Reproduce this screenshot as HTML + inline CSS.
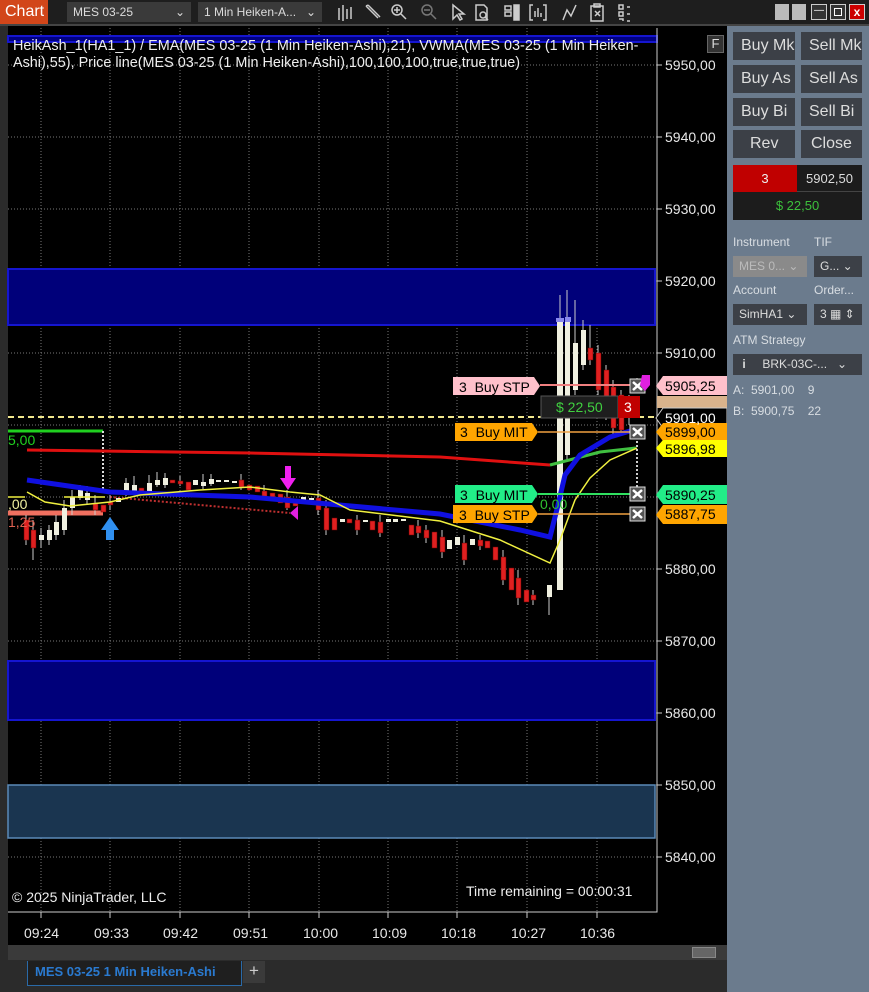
<!DOCTYPE html>
<html><head><meta charset="utf-8"><style>
*{margin:0;padding:0;box-sizing:border-box}
body{width:869px;height:992px;background:#2b2b2b;font-family:"Liberation Sans",Arial,sans-serif;overflow:hidden;position:relative}
.a{position:absolute}
.top{left:0;top:0;width:869px;height:25px;background:#1e1e1e}
.dd{background:#3a3a3a;color:#ddd;font-size:12px;height:20px;top:2px;line-height:20px;padding-left:6px}
.rp{left:727px;top:26px;width:142px;height:966px;background:#6b7b8d}
.btn{background:#3c4047;color:#ddd;font-size:16px;height:28px;line-height:28px;padding-left:8px;overflow:hidden;white-space:nowrap}
.lbl{color:#d8dde2;font-size:12px}
.sel{background:#3c4047;color:#ddd;font-size:12px;height:21px;line-height:21px;padding-left:6px;overflow:hidden;white-space:nowrap}
.ax{color:#e8e8e8;font-size:14px;left:665px}
.tl{color:#e8e8e8;font-size:14px;top:925px}
</style></head><body>
<div class="a top"></div>
<div class="a" style="left:0;top:24px;width:869px;height:2px;background:#444"></div>
<div class="a" style="left:0;top:0;width:48px;height:24px;background:#d2461a;color:#fff;font-size:16px;line-height:24px;padding-left:5px">Chart</div>
<div class="a dd" style="left:67px;width:124px">MES 03-25<span style="position:absolute;right:6px">&#8964;</span></div>
<div class="a dd" style="left:198px;width:124px">1 Min Heiken-A...<span style="position:absolute;right:6px">&#8964;</span></div>
<svg class="a" style="left:330px;top:0" width="300" height="26" stroke="#ccc" fill="none" stroke-width="1.5">
<path d="M9 8v12M13 5v16M17 9v10M21 7v12"/>
<path d="M36 6l12 12M38 5l12 12M36 6l2-1"/>
<circle cx="67" cy="10" r="5"/><path d="M71 14l5 5M64 10h6M67 7v6"/>
<g stroke="#777"><circle cx="97" cy="10" r="5"/><path d="M101 14l5 5M94 10h6"/></g>
<path d="M123 5l0 14 4-4 3 5 2-1-3-5 5 0z"/>
<path d="M146 5h8l3 3v12h-11z"/><circle cx="153" cy="15" r="3"/><path d="M155 17l3 3"/>
<path d="M175 6h6v4h-6zM175 12h6v4h-6z"/><rect x="184" y="5" width="5" height="15" fill="#ccc"/>
<path d="M203 5h-3v15h3M213 5h3v15h-3M205 17v-6M208 17v-9M211 17v-4"/>
<path d="M233 20l4-10 4 6 5-11"/>
<path d="M261 6h12v15h-12zM264 4h6v3h-6z"/><path d="M265 11l5 5M270 11l-5 5"/>
<path d="M289 5h4v4h-4zM289 12h4v4h-4zM289 19h4v2M297 7h10M297 14h10M297 21h10"/>
</svg>
<div class="a" style="left:775px;top:4px;width:14px;height:16px;background:#bbb"></div>
<div class="a" style="left:792px;top:4px;width:14px;height:16px;background:#bbb"></div>
<div class="a" style="left:811px;top:4px;width:16px;height:16px;background:#333;border:1px solid #ccc;color:#fff;font-size:10px;text-align:center">&#8212;</div>
<div class="a" style="left:830px;top:4px;width:16px;height:16px;background:#333;border:1px solid #ccc"><div style="margin:3px;width:8px;height:8px;border:1px solid #fff"></div></div>
<div class="a" style="left:849px;top:4px;width:16px;height:16px;background:#c00;border:1px solid #ccc;color:#fff;font-size:12px;font-weight:bold;line-height:14px;text-align:center">x</div>

<div class="a" style="left:8px;top:26px;width:719px;height:919px;background:#000"></div>
<svg class="a" style="left:0;top:0" width="727" height="960">
<g stroke="#777" stroke-dasharray="1,2" stroke-width="1">
<path d="M8 65H657M8 137H657M8 209H657M8 281H657M8 353H657M8 425H657M8 497H657M8 569H657M8 641H657M8 713H657M8 785H657M8 857H657"/>
<path d="M41 28V912M110 28V912M180 28V912M249 28V912M319 28V912M388 28V912M457 28V912M527 28V912M597 28V912"/>
</g>
<rect x="8" y="36" width="649" height="6" fill="#000080" stroke="#1515d0" stroke-width="2"/>
<rect x="8" y="269" width="647" height="56" fill="#00007a" stroke="#1515d0" stroke-width="2"/>
<rect x="8" y="661" width="647" height="59" fill="#00007a" stroke="#1515d0" stroke-width="2"/>
<rect x="8" y="785" width="647" height="53" fill="#1a3550" stroke="#5a8ab8" stroke-width="1.5"/>
<path d="M657 28V912H8" stroke="#ccc" fill="none"/>
<g stroke="#ccc"><path d="M657 65h5M657 137h5M657 209h5M657 281h5M657 353h5M657 569h5M657 641h5M657 713h5M657 785h5M657 857h5M41 912v6M110 912v6M180 912v6M249 912v6M319 912v6M388 912v6M457 912v6M527 912v6M597 912v6"/></g>
<path d="M8 417H657" stroke="#f0e68c" stroke-width="2" stroke-dasharray="6,4"/>
<path d="M8 431H103" stroke="#20d020" stroke-width="3"/>
<path d="M103 431V495" stroke="#ddd" stroke-width="2" stroke-dasharray="2,2"/>
<path d="M8 513H103" stroke="#f07060" stroke-width="5"/>
<path d="M110 497L290 513" stroke="#c03030" stroke-width="2" stroke-dasharray="2,2"/>
<g stroke="#ccc" stroke-width="1">
<path d="M26 515v30M33 520v40M41 528v20M49 525v20M56 515v25M64 500v35M72 490v25M80 485v15M87 486v18M95 495v20M110 495v15M126 478v18M134 476v18M149 475v20M157 472v15M165 473v15M180 476v10M203 474v15M211 474v12M241 474v16M264 485v15M287 490v20M318 490v25M326 500v35M357 515v20M380 515v22M418 520v18M426 525v18M442 530v28M464 535v30M480 535v15M503 550v35M518 570v35M533 590v15M549 585v30M560 295v295M567 290v170M575 300v95M583 320v50M590 325v40M598 345v50M606 365v55M613 380v55M621 390v45M629 395v30"/>
</g>
<g fill="#f0f0e0">
<rect x="39" y="535" width="5" height="5"/><rect x="47" y="530" width="5" height="10"/><rect x="54" y="522" width="5" height="13"/><rect x="62" y="508" width="5" height="22"/><rect x="70" y="497" width="5" height="11"/><rect x="78" y="490" width="5" height="8"/><rect x="85" y="493" width="5" height="7"/><rect x="116" y="498" width="5" height="4"/><rect x="124" y="483" width="5" height="9"/><rect x="132" y="485" width="5" height="7"/><rect x="147" y="483" width="5" height="9"/><rect x="155" y="480" width="5" height="5"/><rect x="163" y="478" width="5" height="7"/><rect x="193" y="480" width="5" height="5"/><rect x="201" y="482" width="5" height="4"/><rect x="209" y="479" width="5" height="5"/><rect x="216" y="480" width="5" height="2"/><rect x="224" y="480" width="5" height="2"/><rect x="232" y="481" width="5" height="2"/><rect x="301" y="497" width="5" height="3"/><rect x="309" y="498" width="5" height="2"/><rect x="340" y="519" width="5" height="3"/><rect x="363" y="520" width="5" height="2"/><rect x="386" y="519" width="5" height="3"/><rect x="393" y="519" width="5" height="3"/><rect x="401" y="519" width="5" height="2"/><rect x="447" y="540" width="5" height="9"/><rect x="455" y="537" width="5" height="8"/><rect x="470" y="539" width="5" height="6"/><rect x="547" y="585" width="5" height="12"/>
<rect x="557" y="320" width="6" height="270"/><rect x="565" y="320" width="5" height="135"/><rect x="573" y="343" width="5" height="47"/><rect x="581" y="330" width="5" height="35"/>
</g>
<rect x="556" y="318" width="8" height="4" fill="#8888ee"/><rect x="565" y="317" width="6" height="5" fill="#8888ee"/>
<g fill="#e02020" stroke="#600" stroke-width=".5">
<rect x="24" y="520" width="5" height="20"/><rect x="31" y="530" width="5" height="18"/><rect x="93" y="503" width="5" height="7"/><rect x="101" y="505" width="5" height="7"/><rect x="108" y="502" width="5" height="3"/><rect x="139" y="488" width="5" height="7"/><rect x="170" y="480" width="5" height="3"/><rect x="178" y="481" width="5" height="3"/><rect x="186" y="482" width="5" height="8"/><rect x="239" y="480" width="5" height="7"/><rect x="247" y="485" width="5" height="5"/><rect x="255" y="486" width="5" height="6"/><rect x="262" y="491" width="5" height="6"/><rect x="270" y="493" width="5" height="4"/><rect x="278" y="494" width="5" height="9"/><rect x="285" y="497" width="5" height="11"/><rect x="293" y="503" width="5" height="3"/><rect x="316" y="498" width="5" height="12"/><rect x="324" y="508" width="5" height="22"/><rect x="332" y="518" width="5" height="12"/><rect x="347" y="519" width="5" height="4"/><rect x="355" y="520" width="5" height="10"/><rect x="370" y="521" width="5" height="9"/><rect x="378" y="522" width="5" height="11"/><rect x="409" y="525" width="5" height="10"/><rect x="416" y="526" width="5" height="7"/><rect x="424" y="530" width="5" height="8"/><rect x="432" y="532" width="5" height="16"/><rect x="440" y="537" width="5" height="15"/><rect x="462" y="543" width="5" height="17"/><rect x="478" y="540" width="5" height="6"/><rect x="485" y="541" width="5" height="7"/><rect x="493" y="547" width="5" height="13"/><rect x="501" y="557" width="5" height="23"/><rect x="509" y="568" width="5" height="22"/><rect x="516" y="578" width="5" height="20"/><rect x="524" y="590" width="5" height="12"/><rect x="531" y="595" width="5" height="5"/><rect x="588" y="348" width="5" height="12"/><rect x="596" y="353" width="5" height="37"/><rect x="604" y="370" width="5" height="43"/><rect x="611" y="387" width="5" height="41"/><rect x="619" y="395" width="5" height="35"/><rect x="627" y="400" width="5" height="10"/>
</g>
<path d="M27 450L250 453L440 457L550 465" stroke="#e01010" stroke-width="3" fill="none"/>
<path d="M550 465L600 452L636 448" stroke="#40c040" stroke-width="3" fill="none"/>
<path d="M27 480L110 492L250 497L440 514L520 530L550 537L558 505L565 475L580 455L610 437L640 428" stroke="#1010e0" stroke-width="5" fill="none"/>
<path d="M27 492L45 502L70 506L110 502L140 495L200 490L250 487L290 492L320 495L350 510L440 521L500 540L550 563L560 540L575 500L590 478L610 460L637 448" stroke="#f0f040" stroke-width="1.5" fill="none"/>
<path d="M8 497H25M64 497H105" stroke="#f0f040" stroke-width="1.5"/>
<path d="M106 530v10h8v-10h5l-9-13-9 13z" fill="#3090f0"/>
<path d="M285 466v12h-5l8 12 8-12h-5v-12z" fill="#f020f0"/>
<path d="M298 506v14l-8-7z" fill="#e020e0"/>
<path d="M637 392v-16" stroke="#ccc" stroke-dasharray="2,2"/>
<path d="M637 441v50" stroke="#ccc" stroke-width="2" stroke-dasharray="2,2"/>
<path d="M540 385H632" stroke="#f08080" stroke-width="2"/>
<path d="M538 432H632" stroke="#f0a040" stroke-width="1.5"/>
<path d="M538 494H632" stroke="#30e060" stroke-width="2"/>
<path d="M538 514H632" stroke="#f0a040" stroke-width="1.5"/>
<path d="M453 377h81l6 9-6 9h-81z" fill="#ffc0cb"/>
<path d="M455 423h77l6 9-6 9h-77z" fill="#ffa500"/>
<path d="M455 485h77l6 9-6 9h-77z" fill="#22ee88"/>
<path d="M453 505h79l6 9-6 9h-79z" fill="#ffa500"/>
<g fill="#555" stroke="#ddd"><rect x="630" y="379" width="15" height="14"/><rect x="630" y="425" width="15" height="14"/><rect x="630" y="487" width="15" height="14"/><rect x="630" y="507" width="15" height="14"/></g>
<g stroke="#fff" stroke-width="2.5"><path d="M633 382l9 8M642 382l-9 8M633 428l9 8M642 428l-9 8M633 490l9 8M642 490l-9 8M633 510l9 8M642 510l-9 8"/></g>
<path d="M642 375h8v10l-5 6-5-6z" fill="#e020e0"/>
<rect x="541" y="396" width="77" height="22" fill="#1e1e1e" stroke="#555"/>
<rect x="618" y="396" width="22" height="22" fill="#c00000"/>
<path d="M663 376h64v19h-64l-7-9z" fill="#ffc0cb"/>
<rect x="657" y="396" width="70" height="12" fill="#d9b38c"/>
<path d="M663 408h64v20h-64l-7-10z" fill="#000" stroke="#ccc"/>
<path d="M663 423h64v18h-64l-7-9z" fill="#ffa500"/>
<path d="M663 440h64v17h-64l-7-9z" fill="#ffff00"/>
<path d="M663 485h64v19h-64l-7-9z" fill="#22ee88"/>
<path d="M663 505h64v19h-64l-7-9z" fill="#ffa500"/>
</svg>
<div class="a" style="left:13px;top:38px;width:640px;color:#eee;font-size:14.4px;line-height:17px">HeikAsh_1(HA1_1) / EMA(MES 03-25 (1 Min Heiken-Ashi),21), VWMA(MES 03-25 (1 Min Heiken-Ashi),55), Price line(MES 03-25 (1 Min Heiken-Ashi),100,100,100,true,true,true)</div>
<div class="a" style="left:707px;top:35px;width:17px;height:18px;background:#333;border:1px solid #666;color:#ddd;font-size:13px;text-align:center;line-height:16px">F</div>
<div class="a ax" style="top:57px">5950,00</div>
<div class="a ax" style="top:129px">5940,00</div>
<div class="a ax" style="top:201px">5930,00</div>
<div class="a ax" style="top:273px">5920,00</div>
<div class="a ax" style="top:345px">5910,00</div>
<div class="a ax" style="top:561px">5880,00</div>
<div class="a ax" style="top:633px">5870,00</div>
<div class="a ax" style="top:705px">5860,00</div>
<div class="a ax" style="top:777px">5850,00</div>
<div class="a ax" style="top:849px">5840,00</div>
<div class="a ax" style="top:378px;color:#000">5905,25</div>
<div class="a ax" style="top:410px;color:#fff">5901,00</div>
<div class="a ax" style="top:424px;color:#000">5899,00</div>
<div class="a ax" style="top:441px;color:#000">5896,98</div>
<div class="a ax" style="top:487px;color:#000">5890,25</div>
<div class="a ax" style="top:506px;color:#000">5887,75</div>
<div class="a" style="left:459px;top:379px;font-size:14px;color:#000">3&nbsp; Buy STP</div>
<div class="a" style="left:460px;top:424px;font-size:14px;color:#000">3&nbsp; Buy MIT</div>
<div class="a" style="left:460px;top:487px;font-size:14px;color:#000">3&nbsp; Buy MIT</div>
<div class="a" style="left:459px;top:507px;font-size:14px;color:#000">3&nbsp; Buy STP</div>
<div class="a" style="left:556px;top:399px;font-size:14px;color:#40d040">$ 22,50</div>
<div class="a" style="left:624px;top:399px;font-size:14px;color:#fff">3</div>
<div class="a" style="left:540px;top:496px;font-size:14px;color:#30c030">0,00</div>
<div class="a" style="left:8px;top:432px;font-size:14px;color:#20d020">5,00</div>
<div class="a" style="left:8px;top:496px;font-size:14px;color:#f0f0a0">,00</div>
<div class="a" style="left:8px;top:514px;font-size:14px;color:#e06050">1,25</div>
<div class="a" style="left:12px;top:889px;font-size:14px;color:#eee">© 2025 NinjaTrader, LLC</div>
<div class="a" style="left:466px;top:883px;font-size:14px;color:#eee">Time remaining = 00:00:31</div>
<div class="a tl" style="left:24px">09:24</div><div class="a tl" style="left:94px">09:33</div><div class="a tl" style="left:163px">09:42</div><div class="a tl" style="left:233px">09:51</div><div class="a tl" style="left:303px">10:00</div><div class="a tl" style="left:372px">10:09</div><div class="a tl" style="left:441px">10:18</div><div class="a tl" style="left:511px">10:27</div><div class="a tl" style="left:580px">10:36</div>
<div class="a" style="left:8px;top:945px;width:719px;height:15px;background:#3a3a3a"></div>
<div class="a" style="left:692px;top:947px;width:24px;height:11px;background:#666;border:1px solid #888"></div>
<div class="a" style="left:27px;top:961px;width:215px;height:25px;background:#1f1f1f;border:1px solid #2a6aa8;border-top:none;color:#2a7ad0;font-size:13px;font-weight:bold;line-height:22px;padding-left:7px">MES 03-25 1 Min Heiken-Ashi</div>
<div class="a" style="left:243px;top:961px;width:22px;height:22px;background:#3a3a3a;color:#ccc;font-size:17px;text-align:center;line-height:20px">+</div>

<div class="a rp"></div>
<div class="a btn" style="left:733px;top:32px;width:62px">Buy Mk</div><div class="a btn" style="left:801px;top:32px;width:61px">Sell Mk</div>
<div class="a btn" style="left:733px;top:65px;width:62px">Buy As</div><div class="a btn" style="left:801px;top:65px;width:61px">Sell As</div>
<div class="a btn" style="left:733px;top:98px;width:62px">Buy Bi</div><div class="a btn" style="left:801px;top:98px;width:61px">Sell Bi</div>
<div class="a btn" style="left:733px;top:130px;width:62px;padding-left:17px">Rev</div><div class="a btn" style="left:801px;top:130px;width:61px;padding-left:10px">Close</div>
<div class="a" style="left:733px;top:165px;width:64px;height:27px;background:#c00000;color:#eee;font-size:13px;text-align:center;line-height:27px">3</div>
<div class="a" style="left:797px;top:165px;width:65px;height:27px;background:#1c1c1c;color:#ddd;font-size:13px;text-align:center;line-height:27px;border-bottom:1px solid #444">5902,50</div>
<div class="a" style="left:733px;top:192px;width:129px;height:28px;background:#1c1c1c;color:#3cc03c;font-size:13px;text-align:center;line-height:28px">$ 22,50</div>
<div class="a lbl" style="left:733px;top:235px">Instrument</div><div class="a lbl" style="left:814px;top:235px">TIF</div>
<div class="a sel" style="left:733px;top:256px;width:74px;background:#8a8a8a;color:#bbb">MES 0... ⌄</div>
<div class="a sel" style="left:814px;top:256px;width:48px">G... ⌄</div>
<div class="a lbl" style="left:733px;top:283px">Account</div><div class="a lbl" style="left:814px;top:283px">Order...</div>
<div class="a sel" style="left:733px;top:304px;width:74px">SimHA1 ⌄</div>
<div class="a sel" style="left:814px;top:304px;width:48px">3 ▦ ⇕</div>
<div class="a lbl" style="left:733px;top:333px">ATM Strategy</div>
<div class="a sel" style="left:733px;top:354px;width:129px"><b>&nbsp;i</b>&nbsp;&nbsp;&nbsp;&nbsp;&nbsp;BRK-03C-... &nbsp;&nbsp;⌄</div>
<div class="a lbl" style="left:733px;top:383px">A:&nbsp; 5901,00&nbsp;&nbsp;&nbsp; 9</div>
<div class="a lbl" style="left:733px;top:404px">B:&nbsp; 5900,75&nbsp;&nbsp;&nbsp; 22</div>
</body></html>
